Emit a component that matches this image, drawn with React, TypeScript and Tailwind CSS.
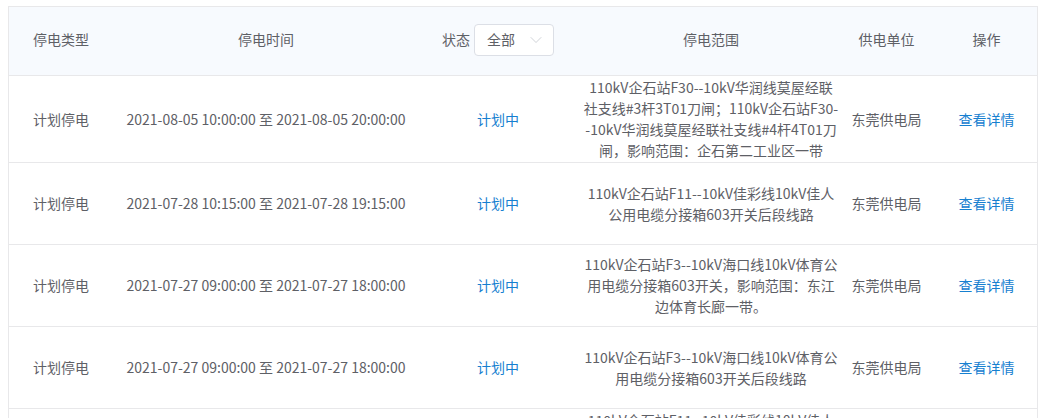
import { ChevronDown } from "lucide-react";

type Outage = {
  type: string;
  start: string;
  end: string;
  status: string;
  scope: string[];
  unit: string;
};

const rows: Outage[] = [
  {
    type: "计划停电",
    start: "2021-08-05 10:00:00",
    end: "2021-08-05 20:00:00",
    status: "计划中",
    scope: [
      "110kV企石站F30--10kV华润线莫屋经联",
      "社支线#3杆3T01刀闸；110kV企石站F30-",
      "-10kV华润线莫屋经联社支线#4杆4T01刀",
      "闸，影响范围：企石第二工业区一带",
    ],
    unit: "东莞供电局",
  },
  {
    type: "计划停电",
    start: "2021-07-28 10:15:00",
    end: "2021-07-28 19:15:00",
    status: "计划中",
    scope: ["110kV企石站F11--10kV佳彩线10kV佳人", "公用电缆分接箱603开关后段线路"],
    unit: "东莞供电局",
  },
  {
    type: "计划停电",
    start: "2021-07-27 09:00:00",
    end: "2021-07-27 18:00:00",
    status: "计划中",
    scope: [
      "110kV企石站F3--10kV海口线10kV体育公",
      "用电缆分接箱603开关，影响范围：东江",
      "边体育长廊一带。",
    ],
    unit: "东莞供电局",
  },
  {
    type: "计划停电",
    start: "2021-07-27 09:00:00",
    end: "2021-07-27 18:00:00",
    status: "计划中",
    scope: ["110kV企石站F3--10kV海口线10kV体育公", "用电缆分接箱603开关后段线路"],
    unit: "东莞供电局",
  },
  {
    type: "计划停电",
    start: "2021-07-26 09:00:00",
    end: "2021-07-26 18:00:00",
    status: "计划中",
    scope: [
      "110kV企石站F11--10kV佳彩线10kV佳人",
      "公用电缆分接箱603开关，影响范围：企",
      "石镇江边村一带，具体以现场为准，请",
      "用户做好停电准备。",
    ],
    unit: "东莞供电局",
  },
];

const cols = "grid grid-cols-[104px_306px_158px_268px_83px_1fr]";

export default function App() {
  return (
    <div
      className="h-[418px] overflow-hidden bg-white pl-2 pr-[10px] pt-[6px] text-[14px] text-[#5e6066]"
      style={{ fontFamily: '"Noto Sans CJK SC", "Noto Sans", sans-serif' }}
    >
      <div className="border-l border-r border-t border-[#e8e8ea]">
        <div
          className={`${cols} h-[69px] items-center border-b border-[#e8e8ea] bg-[#f7fafe] pb-[3px] text-center`}
        >
          <div>停电类型</div>
          <div>停电时间</div>
          <div className="flex items-center justify-center gap-[4px]">
            <span>状态</span>
            <div className="flex h-[32px] w-[80px] items-center justify-between rounded-[4px] border border-[#dcdfe6] bg-white pl-[12px] pr-[7px]">
              <span>全部</span>
              <ChevronDown size={20} strokeWidth={0.8} className="text-[#b8bcc4]" />
            </div>
          </div>
          <div>停电范围</div>
          <div>供电单位</div>
          <div className="pl-[8px]">操作</div>
        </div>

        {rows.map((row, i) => (
          <div
            key={i}
            className={`${cols} min-h-[82px] items-center border-b border-[#e8e8ea] py-[1px] text-center`}
          >
            <div>{row.type}</div>
            <div className="whitespace-nowrap">
              {row.start} 至 {row.end}
            </div>
            <div className="text-[#1680d0]">{row.status}</div>
            <div className="leading-[21px]">
              {row.scope.map((line, j) => (
                <div key={j} className="whitespace-nowrap">
                  {line}
                </div>
              ))}
            </div>
            <div>{row.unit}</div>
            <div className="pl-[8px] text-[#1680d0]">查看详情</div>
          </div>
        ))}
      </div>
    </div>
  );
}
